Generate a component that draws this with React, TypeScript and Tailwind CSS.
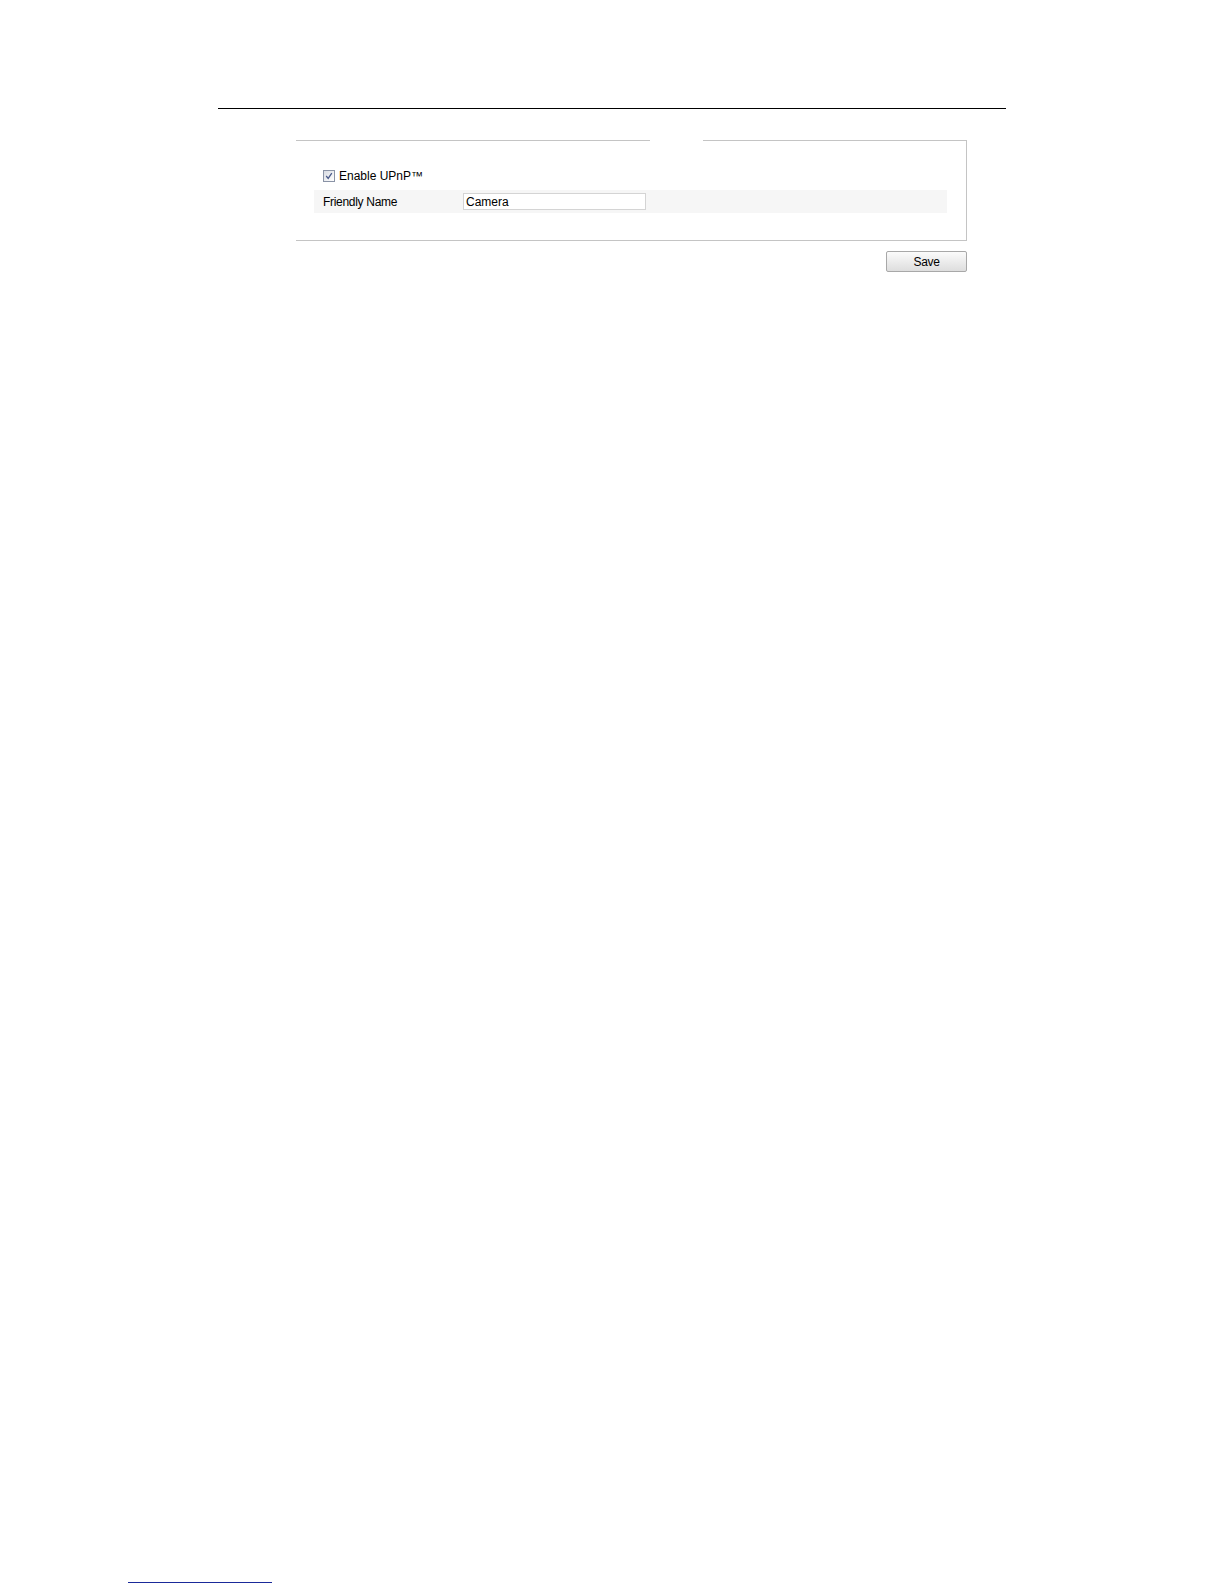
import React from 'react';

const App: React.FC = () => {
  return (
    <div className="relative flex h-screen w-full flex-col overflow-hidden bg-white font-['Liberation_Sans',Arial,sans-serif] text-[12px] text-black">
      {/* page header rule */}
      <div className="ml-[218px] mt-[108px] h-px w-[788px] shrink-0 bg-black" />

      {/* UPnP settings group */}
      <div className="ml-[296px] mt-[31px] w-[671px] shrink-0">
        <div className="flex">
          <div className="h-px w-[354px] bg-[#c4c4c4]" />
          <div className="w-[53px]" />
          <div className="h-px flex-1 bg-[#c4c4c4]" />
        </div>
        <div className="h-[100px] border-r border-b border-[#c4c4c4] pt-[25px]">
          <label className="ml-[27px] flex h-[20px] items-center gap-[4px]">
            <span className="flex h-[12px] w-[12px] items-center justify-center border border-[#8a93a6] bg-gradient-to-br from-[#d8dbe2] to-white">
              <svg viewBox="0 0 10 10" className="h-[8px] w-[8px]">
                <path d="M1.5 5 L4 8 L8.5 1.5" fill="none" stroke="#4a5a8a" strokeWidth={1.6} />
              </svg>
            </span>
            <span>Enable UPnP™</span>
          </label>
          <div className="ml-[18px] mt-[4px] flex h-[23px] w-[633px] items-center bg-[#f6f6f6]">
            <span className="w-[149px] pl-[9px] tracking-[-0.3px]">Friendly Name</span>
            <div className="flex h-[17px] w-[183px] items-center border border-[#d4d4d4] bg-white pl-[2px] text-[12px]">
              Camera
            </div>
          </div>
        </div>
        <div className="mt-[10px] flex justify-end">
          <button className="h-[21px] w-[81px] rounded-[2px] border border-[#a8a8a8] bg-gradient-to-b from-[#fbfbfb] to-[#dedede] text-[12px] tracking-[-0.3px]">
            Save
          </button>
        </div>
      </div>

      {/* footer rule */}
      <div className="mt-auto mb-[1px] ml-[128px] h-px w-[144px] shrink-0 bg-[#1a2a9a]" />
    </div>
  );
};

export default App;
